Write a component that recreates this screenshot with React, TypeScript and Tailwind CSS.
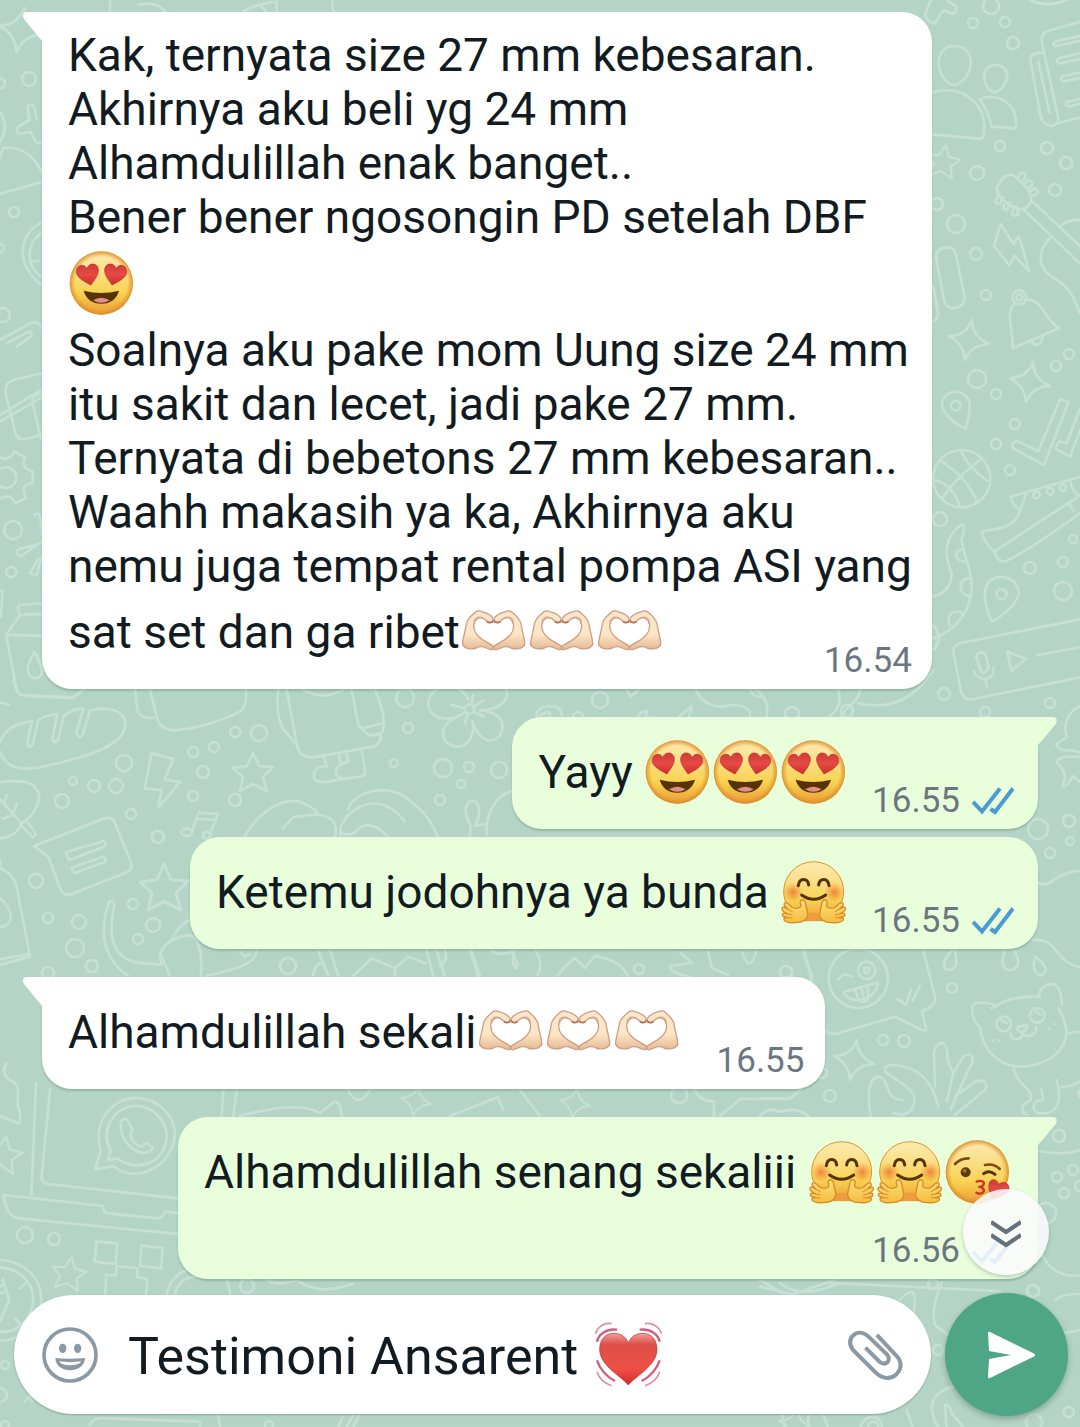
import { useState } from "react";
import type { ReactNode } from "react";

type EmojiName = "heart-eyes" | "hug" | "kiss" | "heart-hands" | "beating-heart";

const LABELS: Record<EmojiName, string> = {
  "heart-eyes": "😍",
  hug: "🤗",
  kiss: "😘",
  "heart-hands": "🫶🏻",
  "beating-heart": "💓",
};

function EmojiDefs() {
  return (
    <svg className="absolute h-0 w-0" aria-hidden="true">
      <defs>
        <linearGradient id="face" x1="0" y1="0" x2="0" y2="1">
          <stop offset="0" stopColor="#fdeab0" />
          <stop offset="0.3" stopColor="#fbe08c" />
          <stop offset="0.65" stopColor="#f8d352" />
          <stop offset="1" stopColor="#eb9b35" />
        </linearGradient>
        <radialGradient id="rim" cx="0.5" cy="0.5" r="0.5">
          <stop offset="0.82" stopColor="#e59a32" stopOpacity="0" />
          <stop offset="1" stopColor="#d98a2b" stopOpacity="0.9" />
        </radialGradient>
        <radialGradient id="blush">
          <stop offset="0" stopColor="#f0672a" stopOpacity="0.75" />
          <stop offset="1" stopColor="#f0802a" stopOpacity="0" />
        </radialGradient>
        <linearGradient id="red" x1="0" y1="0" x2="0" y2="1">
          <stop offset="0" stopColor="#cf3a38" />
          <stop offset="0.5" stopColor="#e54a45" />
          <stop offset="1" stopColor="#cf2f2c" />
        </linearGradient>
        <linearGradient id="bigred" x1="0" y1="0" x2="0" y2="1">
          <stop offset="0" stopColor="#f0a09a" />
          <stop offset="0.22" stopColor="#dd4f48" />
          <stop offset="0.7" stopColor="#ee4f45" />
          <stop offset="1" stopColor="#cf2c2a" />
        </linearGradient>
        <linearGradient id="skin" x1="0" y1="0" x2="0" y2="1">
          <stop offset="0" stopColor="#f9e6cc" />
          <stop offset="0.6" stopColor="#fbe6c6" />
          <stop offset="1" stopColor="#e6b894" />
        </linearGradient>
        <linearGradient id="hand" x1="0" y1="0" x2="0" y2="1">
          <stop offset="0" stopColor="#fbe07a" />
          <stop offset="1" stopColor="#f5bd3e" />
        </linearGradient>

        <g id="heart-eyes">
          <circle cx="95" cy="95" r="95" fill="url(#face)" />
          <circle cx="95" cy="95" r="95" fill="url(#rim)" />
          <g id="eye-heart" fill="url(#red)" stroke="#b52b28" strokeWidth="2">
            <path d="M64 101C48 92 20 80 20 61C20 49 28 42 37 42C44 42 49 46 51 53C54 44 60 38 69 38C79 38 86 46 86 57C86 74 72 88 64 101Z" />
          </g>
          <use href="#eye-heart" transform="translate(191 0) scale(-1 1)" />
          <path d="M42 118Q95 132 148 118C141 143 122 157 95 157S49 143 42 118Z" fill="#553304" />
          <path d="M70 147Q95 132 120 147Q95 162 70 147Z" fill="#e58c8c" />
        </g>

        <g id="hug">
          <path d="M42 166A90 90 0 1 1 150 166L148 181H44Z" fill="url(#face)" stroke="#dc942f" strokeWidth="3" />
          <circle cx="34" cy="96" r="30" fill="url(#blush)" />
          <circle cx="158" cy="96" r="30" fill="url(#blush)" />
          <path d="M50 76C53 52 78 52 81 74" fill="none" stroke="#553304" strokeWidth="9" strokeLinecap="round" />
          <path d="M111 74C114 52 139 52 142 76" fill="none" stroke="#553304" strokeWidth="9" strokeLinecap="round" />
          <path d="M60 104Q96 130 132 104" fill="none" stroke="#553304" strokeWidth="9" strokeLinecap="round" />
          <path d="M78 182L80 158H112L114 182Z" fill="#ee9c3e" />
          <g id="hug-hand" stroke="#d98a28" strokeWidth="4" strokeLinejoin="round" strokeLinecap="round">
            <path d="M56 122C63 115 72 118 72 132L78 158C80 176 64 188 40 187C24 188 10 184 7 179C5 173 12 171 18 172C8 171 1 168 2 162C3 157 10 158 16 160C6 155 -2 150 1 143C3 138 10 141 18 146C9 137 4 132 9 128C14 124 24 134 30 140C40 146 50 144 56 140C60 134 54 128 56 122Z" fill="url(#hand)" />
            <path d="M18 146L32 154M16 160L31 164M18 172L31 173" fill="none" strokeWidth="3" />
          </g>
          <use href="#hug-hand" transform="translate(192 0) scale(-1 1)" />
        </g>

        <g id="kiss">
          <circle cx="95" cy="95" r="95" fill="url(#face)" />
          <circle cx="95" cy="95" r="95" fill="url(#rim)" />
          <path d="M28 71Q44 54 69 54M118 74Q144 68 162 86" fill="none" stroke="#7a4b0e" strokeWidth="8" strokeLinecap="round" />
          <path d="M114 100Q130 88 148 102" fill="none" stroke="#553304" strokeWidth="9" strokeLinecap="round" />
          <circle cx="60" cy="96" r="15" fill="#5f3b0a" />
          <circle cx="57" cy="91" r="6" fill="#94713c" />
          <path d="M93 124C106 118 117 124 114 132C112 139 102 140 98 139C110 140 117 146 114 154C110 161 98 162 92 157" fill="none" stroke="#c8352a" strokeWidth="7" strokeLinecap="round" />
          <path d="M140 175C132 158 126 138 132 125C139 114 155 117 159 132C172 122 189 127 190 143C190 160 160 172 140 175Z" fill="url(#red)" stroke="#b52b28" strokeWidth="2" />
        </g>

        <g id="heart-hands">
          <g id="heart-hand" fill="url(#skin)" stroke="#cf9e82" strokeWidth="4" strokeLinejoin="round">
            <path d="M3 133C1 122 10 98 13 76C14 62 26 48 38 38C44 32 54 29 60 34C76 38 93 46 96 60C95 68 84 68 76 64C66 50 50 50 44 58C32 68 35 90 45 102C58 120 80 126 95 138V146C92 151 82 147 74 143C64 138 54 137 44 143C30 148 10 146 3 133Z" />
            <path d="M40 70C33 60 42 50 54 50C66 50 72 62 82 64" fill="none" strokeWidth="3" />
            <path d="M76 65Q88 71 95 60" fill="none" stroke="#b0705a" strokeWidth="5" />
          </g>
          <use href="#heart-hand" transform="translate(192 0) scale(-1 1)" />
        </g>

        <g id="beating-heart">
          <path d="M98 188C80 164 12 130 12 82C12 50 30 33 55 33C76 33 92 44 98 63C104 44 120 33 141 33C166 33 184 50 184 82C184 130 116 164 98 188Z" fill="url(#bigred)" stroke="#bd3230" strokeWidth="2" />
          <path d="M4 58C8 36 32 18 64 22M58 176C34 164 12 140 4 114" fill="none" stroke="#d05f80" strokeWidth="7" />
          <path d="M0 34C6 12 26 0 48 4M48 190C26 182 10 168 4 148" fill="none" stroke="#dc8ea6" strokeWidth="5" />
          <path d="M192 58C188 36 164 18 132 22M138 176C162 164 184 140 192 114" fill="none" stroke="#d05f80" strokeWidth="7" />
          <path d="M198 34C190 12 170 0 148 4M148 190C170 182 186 168 192 148" fill="none" stroke="#dc8ea6" strokeWidth="5" />
        </g>
      </defs>
    </svg>
  );
}

function Emoji({ name }: { name: EmojiName }) {
  return (
    <svg role="img" aria-label={LABELS[name]} viewBox="-5 -22 204 237" className="inline-block h-[79px] w-[68px] align-[-24px]">
      <use href={`#${name}`} />
    </svg>
  );
}

const dots: [number, number, number][] = [
  [29, 79, 7], [0, 83, 5], [14, 212, 5], [0, 248, 4], [3, 315, 7],
  [991, 6, 8], [973, 23, 5], [1005, 22, 5], [1013, 43, 6], [1000, 146, 5], [1047, 148, 6], [1066, 163, 6], [977, 173, 7],
  [1055, 190, 6], [937, 204, 6], [956, 224, 9], [976, 254, 6], [986, 295, 5], [1069, 354, 5], [1056, 366, 5], [977, 379, 9],
  [996, 394, 5], [1015, 424, 5], [996, 444, 5], [1010, 470, 5], [940, 519, 7], [1073, 539, 4], [1030, 568, 6], [1063, 562, 5], [1063, 591, 9],
  [13, 530, 9], [11, 572, 5], [944, 694, 6],
  [405, 698, 9], [408, 728, 5], [235, 732, 5], [259, 733, 8], [214, 747, 5], [193, 752, 5], [124, 763, 8], [203, 772, 6],
  [73, 781, 4], [94, 786, 6], [116, 786, 7], [62, 801, 7], [193, 796, 5], [235, 800, 6], [131, 814, 5], [158, 837, 6],
  [443, 768, 9], [469, 767, 5], [499, 770, 8], [461, 784, 4], [440, 800, 5], [394, 763, 4], [36, 881, 7], [133, 904, 5],
  [48, 918, 5], [79, 922, 7], [75, 948, 9], [92, 966, 6], [153, 925, 7], [138, 939, 5], [48, 973, 6], [288, 966, 8],
  [600, 700, 8], [578, 717, 5], [792, 714, 7], [847, 711, 6], [985, 712, 5], [1050, 703, 5],
  [1038, 829, 10], [1069, 821, 6], [1070, 841, 4], [1050, 853, 5], [952, 988, 5], [883, 1040, 5], [904, 1041, 6], [822, 1073, 5], [830, 1096, 6],
  [786, 972, 6], [679, 1095, 8], [639, 969, 5],
  [1059, 1136, 6], [1057, 1177, 5], [1073, 1170, 5], [1064, 1193, 5], [1080, 1186, 5], [1046, 1213, 10],
  [25, 1235, 8], [54, 1239, 6], [247, 1286, 7], [5, 1365, 4], [0, 1395, 7], [269, 1425, 4], [933, 1284, 5], [1033, 1291, 6], [938, 1350, 5], [1069, 1412, 5], [1034, 1422, 8], [5, 1425, 4],
];

const star = "M0-19L6-6L20-5L10 5L14 19L0 12L-13 19L-10 5L-20-4L-6-6Z";
const spark = "M3-20Q3-4 20 4Q2 5-4 20Q-5 4-20-4Q-3-4 3-20Z";

function Wallpaper() {
  return (
    <svg
      aria-hidden="true"
      viewBox="0 0 1080 1427"
      preserveAspectRatio="xMidYMin slice"
      className="absolute inset-0 h-full w-full fill-none stroke-[#c6e0d5] stroke-[2.6]"
      strokeLinecap="round"
      strokeLinejoin="round"
    >
      {dots.map(([x, y, r]) => (
        <circle key={`${x}-${y}`} cx={x} cy={y} r={r} />
      ))}
      <path d={star} transform="translate(253 772)" />
      <path d={star} transform="translate(164 887) scale(1.2)" />
      <path d={star} transform="translate(943 161) rotate(10) scale(.85)" />
      <path d={star} transform="translate(69 1273) rotate(10) scale(.85)" />
      <path d={star} transform="translate(3 1154) rotate(10) scale(.95)" />
      <path d={spark} transform="translate(21 30) scale(1.1)" />
      <path d={spark} transform="translate(969 340)" />
      <path d={spark} transform="translate(1030 382)" />
      <path d={spark} transform="translate(854 1060)" />
      <path d={spark} transform="translate(575 1103) scale(.75)" />
      <path d={spark} transform="translate(416 1101) scale(.75)" />
      <path d={spark} transform="translate(795 1424) scale(.8)" />

      {/* upper right: people, notebook, guitar, bolt, bell */}
      <g transform="translate(920) scale(.3333)" strokeWidth="8">
        <path d="M40-20L15 45Q20 65 45 70L70 30L100 42Q112 34 110 20L85 5V-10M330 0Q380 25 440 0" />
        <path d="M104 138C140 138 155 165 152 195C148 230 118 255 100 255C75 250 55 215 56 185C58 155 78 138 104 138ZM226 195C255 195 265 220 261 235C255 260 235 277 222 277C205 272 192 250 192 230C194 205 208 195 226 195Z" />
        <path d="M0 290C80 255 140 270 175 320C195 350 196 385 190 408Q188 418 176 416L0 400M178 298C225 280 265 300 282 335C290 360 290 375 286 385L215 380Q205 330 178 298Z" />
        <path d="M500 60L385 92Q360 100 366 130L414 350Q418 375 392 378Q370 376 362 350L332 185Q328 165 348 160L372 156M355 185L388 337M412 370L500 348M500 103L405 125Q392 135 408 138L500 118M500 155L415 175Q405 188 420 190L500 172M500 212L425 230Q420 242 432 244L500 230M500 292L440 306Q434 318 446 320L500 306" />
        <path d="M232 560Q250 522 275 524C310 545 340 580 332 605Q322 628 300 628C270 620 225 590 232 560ZM292 535L303 518Q320 518 316 532L305 548M312 555L324 540Q340 540 336 555L324 568M330 575L343 565Q358 570 352 580L338 588M250 592L240 612Q224 612 226 600L238 585M270 608L262 630Q246 630 252 616M292 622L294 645Q280 650 276 640L282 618M338 605L490 748M314 632L490 800M420 680Q445 655 490 660M388 715C350 760 355 805 395 830C450 860 460 890 480 940" />
        <path d="M242 672L280 732L296 708L328 815L284 768L268 796L222 738Z" />
        <path d="M48 770Q50 745 80 742Q102 742 108 765L134 890Q134 920 102 925Q78 925 72 900ZM40 860L54 940Q54 958 40 965" />
        <circle cx="298" cy="892" r="21" /><circle cx="298" cy="892" r="9" />
        <path d="M282 912C255 945 280 985 278 1045L418 984C370 960 375 900 318 898M334 1022C340 1045 370 1035 366 1008" />
      </g>

      {/* right: pin, ticks, ball, shoe, tentacle, voice note */}
      <g transform="translate(920 350) scale(.3333)" strokeWidth="8">
        <path d="M136 237C95 215 65 190 66 160C75 112 140 115 149 160C150 190 145 210 136 237Z" /><circle cx="107" cy="167" r="14" />
        <path d="M420 148L446 156L372 345L280 296Q272 282 290 272L355 304ZM490 150L440 280L418 274L406 295L450 320L500 190" />
        <circle cx="125" cy="386" r="86" />
        <path d="M125 305Q142 350 202 392M62 332C120 370 155 410 172 458M182 328C130 370 95 400 68 445M42 388Q105 410 118 468" />
        <path d="M272 440L490 378M272 440Q275 465 300 480L320 430M300 480C285 540 225 535 185 545Q190 575 222 605L490 430M222 605Q235 638 255 635Q330 600 490 482M445 460L462 484M450 390Q455 425 480 438" />
        <circle cx="350" cy="435" r="10" /><circle cx="391" cy="424" r="10" /><circle cx="429" cy="413" r="10" />
        <path d="M40 740C85 728 95 700 95 670C80 630 60 570 126 522Q138 525 125 570C130 620 155 655 155 710C155 780 110 840 40 865M130 598C100 595 100 632 134 635M150 685C112 685 112 735 152 740M88 825C78 795 100 775 130 790M40 828Q55 838 54 856" />
        <path d="M216 815C198 780 188 735 200 705C225 665 290 675 297 728C290 765 250 795 216 815Z" /><circle cx="245" cy="732" r="15" />
        <path d="M490 806L120 880Q98 888 100 908L122 1020Q130 1052 158 1048L490 980M350 916L490 890M262 905L318 927L274 963ZM168 918Q180 900 196 912L206 952Q200 972 184 966ZM160 964C180 1000 225 990 220 954M196 988L201 1010" />
      </g>

      {/* left margin: plus, beetle, clock, gear, carton */}
      <g transform="scale(.3333)" strokeWidth="8">
        <path d="M82 320Q92 308 102 320L110 355M88 360L82 320M88 360L55 380Q44 394 58 402L92 396L106 424Q114 434 122 428M0 470L10 445C60 435 110 470 130 530M0 582L130 545M0 335Q30 380 0 425M130 665C50 700 45 800 130 860M130 695C75 730 75 800 130 835M95 785L115 782" />
        <path d="M0 1020L90 970Q120 960 130 990M20 1030L85 995Q100 995 92 1010L50 1040M330 0V40M415 15Q470 0 500 40M730 35Q770 10 830 5V38M780 15L800 38M1000 0Q990 20 1005 38M0 1245L130 1165M0 1265L130 1190" />
        <path d="M125 1120L40 1140Q14 1150 16 1175L45 1295Q50 1320 75 1318L125 1305M130 1180Q90 1185 98 1210L122 1315" />
        <circle cx="18" cy="1433" r="31" />
        <path d="M0 1372Q30 1385 42 1355L75 1372Q60 1405 98 1415V1450Q58 1450 78 1495L45 1510Q35 1480 0 1495M104 1545Q112 1535 120 1548L128 1610M125 1625L60 1670Q44 1655 55 1648L125 1630M125 1670L110 1725L90 1720L115 1675" />
        <path d="M125 1810L62 1815Q52 1815 54 1830L60 1845L125 1842M60 1845L18 1905L50 2070Q55 2085 75 2088L220 2095M18 1905L125 1908M103 1955C85 1990 75 2015 92 2030C112 2040 128 2030 126 2010Q120 1985 103 1955ZM0 1772L8 1775L2 1850" />
      </g>

      {/* centre left: bread, bag, bolt, leaf, notes, note card, banana */}
      <g transform="translate(0 680) scale(.3333)" strokeWidth="8">
        <path d="M40 0Q50 45 65 45L220 52L255 25M0 68L28 74M0 185C15 145 60 125 96 124L82 185Q85 210 98 195L115 120Q135 105 172 102L158 175Q160 195 175 180L190 110Q215 85 250 86L230 155Q235 180 248 165L270 92C330 75 385 95 374 145C360 200 260 230 150 255C60 280 15 260 0 215" />
        <path d="M405 28L412 90Q420 118 462 114M450 28L470 110Q480 155 530 150C600 145 680 115 720 95Q742 80 738 28M835 28Q825 100 850 150L862 160M860 28L892 200Q900 235 940 232L1120 200Q1145 190 1142 165M862 160L885 190M1055 28L1075 135Q1085 150 1100 142L1150 128Q1155 100 1125 28M1088 148Q1110 180 1148 155L1152 130M910 28Q970 65 1030 28M972 232L980 258L955 262Q935 280 945 300Q965 312 1000 302L1092 288Q1100 280 1085 212M1018 226L1022 248M1040 220L1045 245Q1000 255 1010 285Q1020 300 1040 294" />
        <path d="M455 220L520 237L494 298L540 306L475 383L485 330L434 325ZM0 306C60 300 110 300 118 350C110 395 90 415 65 432C50 465 20 475 0 475M0 358L65 430L78 420L108 462L98 472L60 432M20 345L12 372M50 372L38 405L8 416" />
        <path d="M596 398L655 402L630 462M596 398L575 455M590 416L650 420" /><ellipse cx="560" cy="457" rx="16" ry="11" /><ellipse cx="620" cy="466" rx="11" ry="11" />
        <path d="M102 498L310 416Q338 408 345 430L394 550Q398 570 378 578L215 642Q190 652 180 625L145 530ZM202 528Q190 520 206 514L310 484Q322 488 312 500L208 540ZM218 572Q210 564 224 560L310 530Q324 536 314 546L222 580" />
        <path d="M735 468C760 420 830 350 900 365Q940 380 955 402M848 445L880 412Q960 395 990 415Q1015 435 1005 468M1045 388C1060 330 1170 310 1220 355C1260 385 1290 410 1312 468M1022 465C1010 420 1080 360 1140 372Q1180 380 1215 425M1022 455Q1040 470 1060 460L1085 440Q1120 425 1160 466" />
        <path d="M1460 465C1455 400 1490 340 1545 330M1412 435C1385 390 1400 360 1422 364C1445 375 1440 410 1425 438L1455 432M1412 440L1410 466" />
        <path d="M1405 58C1380 0 1290 10 1285 70C1285 100 1310 125 1370 112C1320 130 1310 190 1370 200C1410 200 1425 160 1418 125C1435 185 1480 195 1500 165C1520 130 1500 95 1440 90C1500 90 1530 60 1518 28" /><circle cx="1408" cy="88" r="14" />
        <path d="M1355 75L1390 84M1426 98L1450 108M1370 110L1394 98M1424 78L1450 62M1396 130L1402 104M1414 72L1420 45" />
        <path d="M0 540V565Q40 580 50 620L90 830L0 855M0 838L88 822M0 655Q40 690 30 725Q15 742 0 740" />
        <path d="M328 665Q345 660 342 680C325 760 330 850 440 850L485 855M328 665C300 740 300 830 385 888M590 712Q540 725 515 780M485 855Q470 810 510 785Q570 750 590 780Q610 830 602 888M485 830L510 888M770 810Q770 850 690 870L620 888M720 815L735 830L750 822M955 812L985 888M990 812L1015 888M940 885Q945 850 970 848M1060 888L1115 835L1185 865L1225 830L1275 850M1280 812L1300 888M1310 812L1335 888M1185 865V888M1335 812Q1345 845 1320 855M1415 812L1440 888M1475 812Q1500 830 1545 812M1545 812Q1530 850 1550 865" />
      </g>

      {/* band under the first message */}
      <g transform="translate(440 590) scale(.3333)" strokeWidth="8">
        <path d="M290 378Q290 350 330 348Q365 348 366 378M300 378Q330 355 330 378M595 378Q605 365 622 362L618 378M560 300L572 320L595 300M718 378L755 350L748 378M768 300Q790 350 850 350Q905 335 930 365V378M930 300Q940 325 970 320M950 300Q990 330 980 378M1195 300Q1210 350 1170 378M1260 300C1255 340 1215 350 1205 378M1255 340C1350 360 1420 330 1480 240M1480 180Q1500 160 1495 130" />
      </g>

      {/* right: chat face, drops, cat, hand */}
      <g transform="translate(760 840) scale(.3333)" strokeWidth="8">
        <path d="M130 332L155 420M490 332L525 470Q530 500 486 512L498 565Q500 575 485 570L405 530L235 580Q205 585 192 570M412 478L438 494L454 448M458 482L480 438M415 478L435 492" />
        <circle cx="295" cy="415" r="89" /><circle cx="320" cy="391" r="26" /><circle cx="320" cy="391" r="8" />
        <path d="M236 418Q250 395 276 410M250 456L354 428C350 480 270 500 250 456ZM285 450L295 475Q315 500 325 470L322 438M305 446L310 468M575 332C545 365 545 390 570 390C595 385 590 360 585 332M735 332C720 370 730 390 752 390C780 385 780 355 762 332M826 350C815 385 825 405 845 405C865 395 860 375 826 350ZM825 122Q855 145 880 120Q920 92 970 92M820 300C900 295 880 370 970 385" />
        <path d="M695 505C740 475 780 468 840 470M660 562Q635 540 636 500Q645 480 695 492L708 500M835 470Q845 430 880 432Q905 440 905 495M660 562C670 650 740 680 780 680C880 675 960 610 895 505" />
        <circle cx="731" cy="552" r="22" /><circle cx="832" cy="526" r="22" />
        <path d="M725 540L742 550M828 514L842 524M752 582C755 605 785 600 788 582C795 592 830 590 828 562M772 568Q770 555 785 560Q800 550 802 562L788 580ZM698 600V602M715 602V604M868 566V568M882 552V554M920 582Q940 575 970 574M760 682C770 740 820 740 812 780L790 795Q780 815 800 824M842 745Q858 790 838 780C815 785 815 820 840 820C900 825 905 775 890 720M905 742Q935 740 970 720M970 745Q940 760 970 780" />
        <path d="M332 828Q320 760 335 725Q355 695 375 725L392 765Q405 780 430 780M535 800C520 730 480 680 400 675Q370 675 376 695C400 720 430 720 462 765Q470 810 430 825L400 820M525 740L522 640Q530 605 550 610Q565 620 562 660L580 700L560 785M580 700L610 650Q640 630 638 665L590 765L572 810M590 765L650 722Q690 720 675 750L585 825M0 775H90L125 745M0 828Q20 800 60 815Q110 800 145 828" />
      </g>

      {/* far right: burger and pebbles */}
      <path d="M1080 706C1066 713 1063 728 1067 737L1056 744Q1060 753 1072 750L1080 753M1057 761Q1062 755 1080 757M1057 763Q1070 775 1062 785Q1065 790 1073 776L1080 782M1040 1151Q1062 1156 1080 1150M1040 1248C1045 1270 1065 1278 1080 1275M1056 1300Q1060 1294 1080 1294M1064 1333Q1080 1330 1080 1330M942 1282Q930 1310 935 1325L948 1335M900 1300Q918 1280 914 1310L910 1330M780 1283Q800 1300 840 1283M830 1283L1000 1291" />

      {/* band between the last bubbles */}
      <path d="M470 950Q475 965 479 980M512 950Q515 960 518 965M535 950Q545 965 536 977M557 976Q565 965 575 958L585 968L595 956Q620 960 628 976M680 952L692 963L670 966Q668 972 690 977M708 952L712 968L728 975M742 952Q750 975 756 952M803 950L812 976M695 1090Q700 1102 714 1101V1116M720 1116L740 1099H790L800 1090M450 1116L498 1097L503 1110M520 1090L540 1116M240 1116Q300 1100 320 1113L334 1102Q340 1100 342 1116M348 1090Q358 1110 370 1090" />

      {/* lower left: bell, laptop, pixel figure, compass */}
      <g transform="translate(0 1080) scale(.3333)" strokeWidth="8">
        <path d="M30 0C75 20 40 60 58 90Q65 125 55 130L0 108M20-50Q0-20 30 0M108 10L94 345M150 28L125 290Q125 310 145 312L535 355M670 34L665 108M710 34L700 108M10 345L310 378Q310 400 325 400L475 415Q490 412 495 395L535 400M10 345Q20 410 55 415L535 462" />
        <path d="M285 268L303 212C275 130 335 50 415 54C485 60 535 120 522 180C505 270 400 310 340 258Z" />
        <path d="M325 240L332 212C300 150 340 85 400 78C470 75 510 140 498 185C480 265 390 270 355 235Z" />
        <path d="M362 130Q365 115 382 118L398 150L390 165Q400 195 425 200L440 188L458 204Q450 222 425 218C390 210 360 175 362 130Z" />
        <path d="M290 485L352 490L347 552L284 545ZM425 497L488 504L483 565L420 558ZM316 645L318 585L347 587L350 558L412 564V592L442 597L438 645M500 645C510 590 550 560 600 570M525 645Q535 590 590 590M690 645Q690 620 680 600M800 600Q830 620 890 600Q960 650 1060 610M0 540C80 545 125 600 124 660C120 730 60 785 0 782M0 562C60 565 100 610 100 660C95 720 50 760 0 755M8 598L28 658L0 725M0 620L12 612M0 640L20 632M60 625L78 610M45 715L58 730M75 965L95 940V965M270 1035Q280 1010 320 1015L600 1025V1041M655 1005L660 1041M1015 1041L1030 1008M1040 1041L1060 1005M1060 1041L1075 1008" />
      </g>

      {/* lower right */}
      <g transform="translate(760 1120) scale(.3333)" strokeWidth="8">
        <path d="M65 882L75 925M145 882V925M190 882L205 925M300 925Q310 890 340 890Q370 900 365 925M440 870L460 925M515 860C520 820 560 800 590 800M515 860Q520 910 540 925M555 855Q570 850 575 880L610 920M555 855L560 925M0 500L95 522M100 522L225 480M0 480L70 520" />
        <circle cx="340" cy="920" r="15" />
      </g>
    </svg>
  );
}

function Ticks() {
  return (
    <svg role="img" aria-label="Dibaca" viewBox="0 0 42 28" className="h-7 w-[42px] fill-none stroke-[#4a9bd1] stroke-[4]">
      <path d="M1 15L10 24.500L28 1.500M18.500 22L23 25L41 1.500" />
    </svg>
  );
}

function Time({ children, read, className = "" }: { children: string; read?: boolean; className?: string }) {
  return (
    <span className={`-mb-2.5 flex shrink-0 items-center gap-3 self-end text-[35px] leading-[42px] text-[#6b7780] ${className}`}>
      <time>{children}</time>
      {read && <Ticks />}
    </span>
  );
}

function Bubble({ side, tail, className, children }: { side: "in" | "out"; tail?: boolean; className: string; children: ReactNode }) {
  const look =
    side === "in"
      ? "self-start bg-white pr-[21px]"
      : "self-end bg-[#e9ffdc] pr-6";
  const corner = !tail ? "" : side === "in" ? "rounded-tl-none" : "rounded-tr-none";
  return (
    <article
      className={`relative max-w-full rounded-[30px] pb-[17px] pl-[26px] pt-4 shadow-[0_2px_2px_rgba(60,90,75,0.25)] ${look} ${corner} ${className}`}
    >
      {tail && side === "in" && (
        <svg viewBox="0 0 20 30" className="absolute -left-[19px] top-0 h-[30px] w-5 fill-white" aria-hidden="true">
          <path d="M20 0H4C0 0-1 4 1 7L19 29H20Z" />
        </svg>
      )}
      {tail && side === "out" && (
        <svg viewBox="0 0 20 30" className="absolute -right-[19px] top-0 h-[30px] w-5 fill-[#e9ffdc]" aria-hidden="true">
          <path d="M0 0H16C20 0 21 4 18 8L1 28H0Z" />
        </svg>
      )}
      {children}
    </article>
  );
}

const bodyText = "text-[46px] leading-[54px]";

export default function App() {
  const [draft, setDraft] = useState("Testimoni Ansarent");
  return (
    <div className="relative flex min-h-screen flex-col overflow-hidden bg-[#b4d5c6] font-[Roboto,sans-serif] text-[#111b21]">
      <EmojiDefs />
      <Wallpaper />

      <main className="relative flex grow flex-col pl-[42px] pr-[42px] pt-3">
        <Bubble side="in" tail className="grid w-[890px]">
          <p className={`col-start-1 row-start-1 whitespace-nowrap ${bodyText}`}>
            Kak, ternyata size 27 mm kebesaran.
            <br />
            Akhirnya aku beli yg 24 mm
            <br />
            Alhamdulillah enak banget..
            <br />
            Bener bener ngosongin PD setelah DBF
            <br />
            <Emoji name="heart-eyes" />
            <br />
            Soalnya aku pake mom Uung size 24 mm
            <br />
            itu sakit dan lecet, jadi pake 27 mm.
            <br />
            Ternyata di bebetons 27 mm kebesaran..
            <br />
            Waahh makasih ya ka, Akhirnya aku
            <br />
            nemu juga tempat rental pompa ASI yang
            <br />
            sat set dan ga ribet
            <Emoji name="heart-hands" />
            <Emoji name="heart-hands" />
            <Emoji name="heart-hands" />
          </p>
          <Time className="col-start-1 row-start-1 justify-self-end">16.54</Time>
        </Bubble>

        <Bubble side="out" tail className="mt-7 flex gap-6">
          <p className={bodyText}>
            Yayy <Emoji name="heart-eyes" />
            <Emoji name="heart-eyes" />
            <Emoji name="heart-eyes" />
          </p>
          <Time read>16.55</Time>
        </Bubble>

        <Bubble side="out" className="mt-2 flex gap-6">
          <p className={bodyText}>
            Ketemu jodohnya ya bunda <Emoji name="hug" />
          </p>
          <Time read>16.55</Time>
        </Bubble>

        <Bubble side="in" tail className="mt-7 flex gap-9">
          <p className={bodyText}>
            Alhamdulillah sekali
            <Emoji name="heart-hands" />
            <Emoji name="heart-hands" />
            <Emoji name="heart-hands" />
          </p>
          <Time>16.55</Time>
        </Bubble>

        <Bubble side="out" tail className="mt-7 flex w-[860px] flex-col">
          <p className={`whitespace-nowrap ${bodyText}`}>
            Alhamdulillah senang sekaliii <Emoji name="hug" />
            <Emoji name="hug" />
            <Emoji name="kiss" />
          </p>
          <Time read className="mt-[18px]">16.56</Time>
        </Bubble>

        <button
          type="button"
          aria-label="Gulir ke bawah"
          className="absolute bottom-[5px] right-[31px] flex size-[86px] items-center justify-center rounded-full bg-[#fbfafd]/88 pt-1 shadow-[0_2px_4px_rgba(60,90,75,0.3)]"
        >
          <svg viewBox="0 0 30 28" className="h-7 w-[30px] fill-none stroke-[#65727c] stroke-[4]" aria-hidden="true">
            <path d="M0 2L15 12L30 2M0 15L15 25L30 15" />
          </svg>
        </button>
      </main>

      <form className="relative mt-[13px] flex items-center gap-3.5 pb-[11px] pl-3.5 pr-3" onSubmit={(e) => e.preventDefault()}>
        <div className="flex h-[119px] min-w-0 grow items-center rounded-full bg-white pl-7 pr-7 shadow-[0_1px_2px_rgba(60,90,75,0.4)]">
          <button type="button" aria-label="Emoji" className="shrink-0">
            <svg viewBox="0 0 168 168" className="size-14 fill-[#8a99a3]" aria-hidden="true">
              <circle cx="84" cy="84" r="78" fill="none" stroke="#8a99a3" strokeWidth="11" />
              <ellipse cx="62" cy="64" rx="11" ry="14" />
              <ellipse cx="107" cy="64" rx="11" ry="14" />
              <path d="M40 93Q84 98 129 93C128 142 41 142 40 93Z" />
              <path d="M52 103Q84 108 117 103Q114 114 84 115Q55 114 52 103Z" fill="#fff" />
            </svg>
          </button>
          <input
            type="text"
            aria-label="Ketik pesan"
            value={draft}
            onChange={(e) => setDraft(e.target.value)}
            className="field-sizing-content ml-[30px] min-w-0 bg-transparent pt-1 text-[52px] leading-[62px] outline-none"
          />
          <span className="ml-4">
            <Emoji name="beating-heart" />
          </span>
          <button type="button" aria-label="Lampirkan" className="ml-auto shrink-0">
            <svg viewBox="0 0 164 148" className="h-[50px] w-[55px] fill-none stroke-[#8a99a3] stroke-[12]" aria-hidden="true">
              <path d="M52 52L94 94Q108 105 118 95Q126 84 116 72L62 20C46 5 28 3 15 16C2 28 4 48 18 62L82 126C104 148 128 146 144 132C162 114 160 92 144 76L86 14" />
            </svg>
          </button>
        </div>
        <button
          type="submit"
          aria-label="Kirim"
          className="flex size-[123px] shrink-0 items-center justify-center rounded-full bg-[#4ea687] pl-[9px] shadow-[0_3px_6px_rgba(60,90,75,0.4)]"
        >
          <svg viewBox="0 0 48 48" className="size-12 fill-white" aria-hidden="true">
            <path d="M1 2Q1 0 3 1L47 22.500Q49 24 47 25.500L3 47Q1 48 1 46L2 28L24 24L2 20Z" />
          </svg>
        </button>
      </form>
    </div>
  );
}
